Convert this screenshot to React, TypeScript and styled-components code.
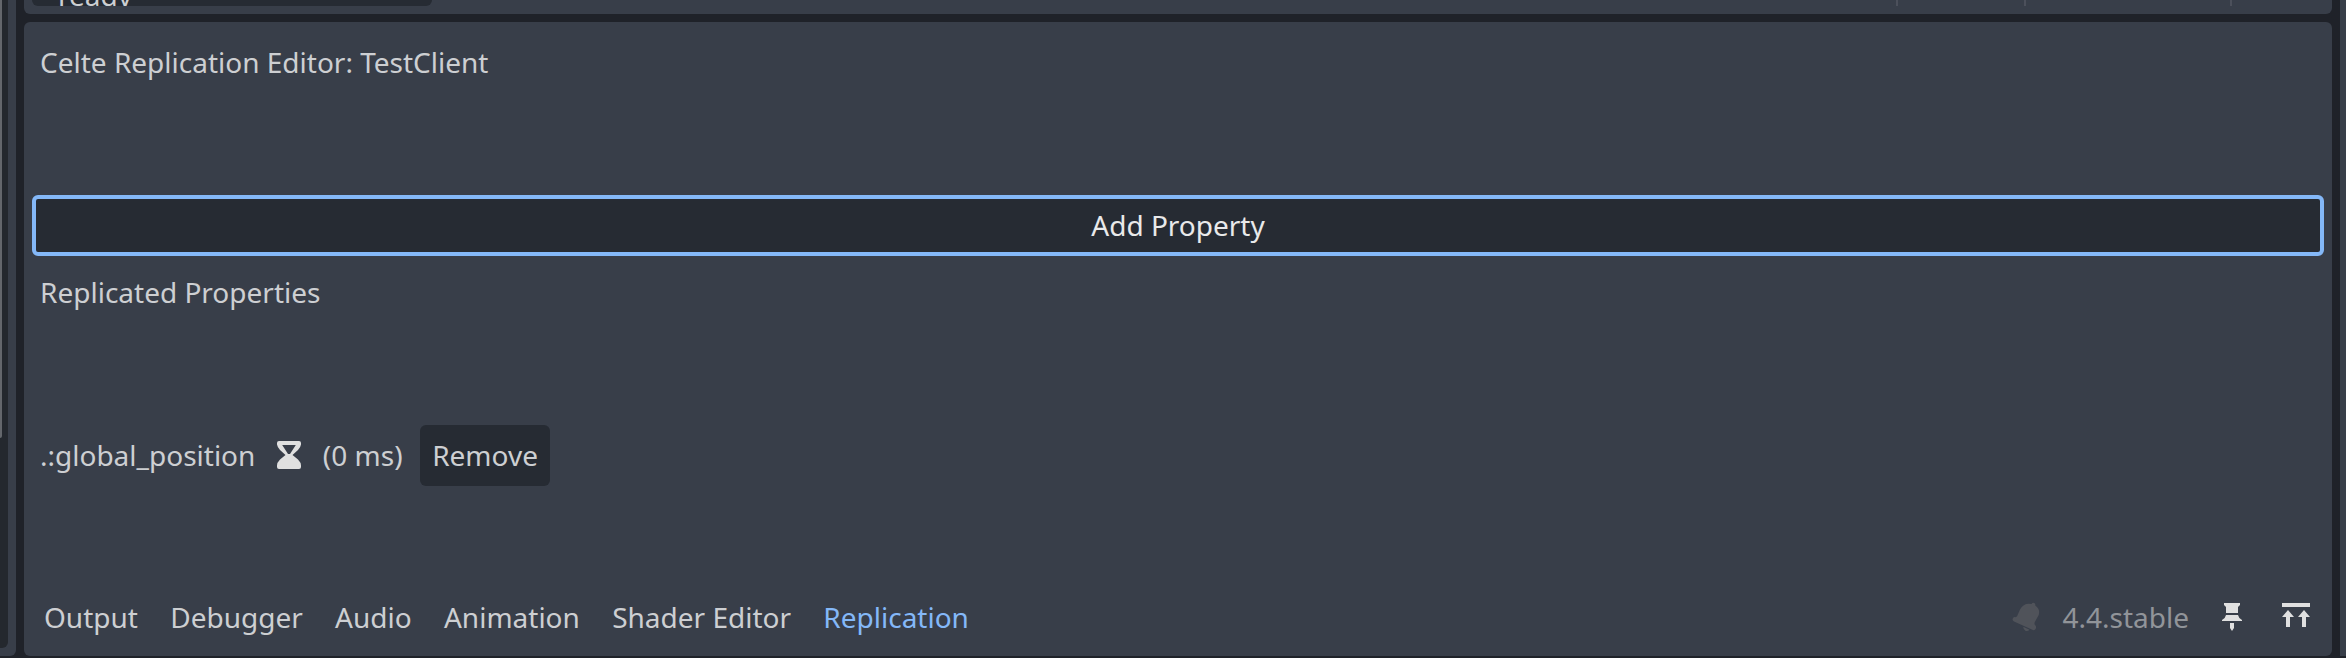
import React from "react";
import styled, { createGlobalStyle } from "styled-components";

const GlobalStyle = createGlobalStyle`
  * { box-sizing: border-box; }
  html, body { margin: 0; background: #1f2229; }
  body { overflow: hidden; font: 28px/38px "Noto Sans", sans-serif; color: #cdcfd2; }
  button { font: inherit; color: inherit; border: 0; background: none; padding: 0; }
`;

const Window = styled.div`
  display: flex;
  gap: 8px;
  width: 2346px;
  height: 658px;
  overflow: hidden;
  white-space: nowrap;
`;

const LeftDock = styled.aside`
  width: 16px;
  height: 656px;
  background: #383e49;
  border-bottom-right-radius: 6px;
`;

const ScrollTrack = styled.div`
  width: 8px;
  height: 648px;
  background: #24282e;
  border-bottom-right-radius: 6px;
`;

const ScrollThumb = styled.div`
  width: 2px;
  height: 438px;
  background: #64676c;
  border-bottom-right-radius: 2px;
`;

const RightDock = styled.aside`
  width: 6px;
  height: 656px;
  background: #383e49;
`;

const Center = styled.main`
  display: flex;
  flex-direction: column;
  gap: 8px;
  width: 2308px;
  height: 656px;
`;

const ScriptPanel = styled.section`
  display: flex;
  align-items: flex-start;
  height: 14px;
  padding: 0 100px 0 8px;
  background: #383e49;
  border-radius: 0 0 6px 6px;
`;

const MethodList = styled.div`
  display: flex;
  align-items: flex-end;
  width: 400px;
  height: 6px;
  margin-right: auto;
  padding-left: 26px;
  overflow: hidden;
  background: #262b33;
  border-radius: 0 0 6px 6px;
`;

const MethodName = styled.span`
  margin-bottom: -8px;
`;

const Separator = styled.i<{ $space: number }>`
  width: 2px;
  height: 6px;
  margin-left: ${(p) => p.$space}px;
  background: #4c505b;
`;

const BottomPanel = styled.section`
  display: flex;
  flex-direction: column;
  flex: 1;
  background: #383e49;
  border-radius: 6px;
`;

const Editor = styled.div`
  flex: 1;
  padding: 21px 8px 0;
`;

const Label = styled.div<{ $gap: number }>`
  margin-left: 8px;
  margin-bottom: ${(p) => p.$gap}px;
`;

const AddButton = styled.button`
  display: block;
  width: 100%;
  height: 61px;
  margin-bottom: 17px;
  padding-bottom: 2px;
  border: 4px solid #84b8f8;
  border-radius: 6px;
  background: #262b33;
  color: #e9e9ea;
`;

const PropertyRow = styled.div`
  display: flex;
  align-items: center;
  height: 61px;
  padding-left: 8px;
`;

const RowText = styled.span`
  padding-bottom: 2px;
`;

const Hourglass = styled.svg`
  width: 32px;
  height: 32px;
  margin: 0 17.5px 1px 18px;
`;

const RemoveButton = styled.button`
  width: 130px;
  height: 61px;
  margin-left: 17.5px;
  padding-bottom: 2px;
  border-radius: 6px;
  background: #262b33;
`;

const BottomBar = styled.nav`
  display: flex;
  align-items: center;
  height: 76px;
  padding: 0 20px 2px;
`;

const Tab = styled.button<{ $active?: boolean }>`
  margin-right: 32.3px;
  color: ${(p) => (p.$active ? "#84b8f8" : "inherit")};
`;

const Status = styled.div`
  display: flex;
  align-items: center;
  margin-left: auto;
`;

const Version = styled.span`
  margin: 0 27px 0 20px;
  color: #919499;
`;

const BarIcon = styled.svg<{ $space?: number }>`
  width: 32px;
  height: 32px;
  margin-left: ${(p) => p.$space ?? 0}px;
`;

const tabs = ["Output", "Debugger", "Audio", "Animation", "Shader Editor", "Replication"];

export default function App() {
  return (
    <>
      <GlobalStyle />
      <Window>
        <LeftDock>
          <ScrollTrack>
            <ScrollThumb />
          </ScrollTrack>
        </LeftDock>
        <Center>
          <ScriptPanel>
            <MethodList>
              <MethodName>ready</MethodName>
            </MethodList>
            <Separator $space={0} />
            <Separator $space={126} />
            <Separator $space={204} />
          </ScriptPanel>
          <BottomPanel>
            <Editor>
              <Label $gap={114}>Celte Replication Editor: TestClient</Label>
              <AddButton>Add Property</AddButton>
              <Label $gap={114}>Replicated Properties</Label>
              <PropertyRow>
                <RowText>.:global_position</RowText>
                <Hourglass viewBox="0 0 32 32" fill="#e0e0e0" fillRule="evenodd">
                  <path d="M6 2h20q2 0 2 2v1.500q-.5 3-3 5.500L19.500 16l5.500 4.500q3 3 3 6V28q0 2-2 2H6q-2 0-2-2v-1.500q0-3 3-6L12.500 16 7 11Q4.500 8.500 4 5.500V4q0-2 2-2zM9.200 6l5.800 9h2l5.800-9z" />
                </Hourglass>
                <RowText>(0 ms)</RowText>
                <RemoveButton>Remove</RemoveButton>
              </PropertyRow>
            </Editor>
            <BottomBar>
              {tabs.map((tab) => (
                <Tab key={tab} $active={tab === "Replication"}>
                  {tab}
                </Tab>
              ))}
              <Status>
                <BarIcon viewBox="0 0 32 32" fill="#50535a">
                  <path d="M21.500 3q1-1.700 2.700-1 1.600.8 1 2.500 5.300 3.500 3.500 9.500l-4 7.300q-.7 1.800.8 3.300 1 1.200.3 3-.9 2-2.900 1.500L4 20.500q-2-1-1.200-3 .9-1.700 2.700-1.300 1.200-.2 1.700-1.200L10 8.500Q14 1.300 21.500 3zM13.200 25.800l6.300 2.900q-1.600 1.900-3.800 1.200-2.500-1-2.500-4.100z" />
                </BarIcon>
                <Version>4.4.stable</Version>
                <BarIcon viewBox="0 0 32 32" fill="#e0e0e0">
                  <path d="M8 2h16v2l-2 2v6H10V6L8 4zM10 14h12q.5 3 4 5v1H6v-1q3.500-2 4-5zM14 22h4v5l-2 3-2-3z" />
                </BarIcon>
                <BarIcon $space={32} viewBox="0 0 32 32" fill="#e0e0e0">
                  <path d="M2 2h28v4H2zM8 9l6 7h-4v10H6V16H2zM24 9l6 7h-4v10h-4V16h-4z" />
                </BarIcon>
              </Status>
            </BottomBar>
          </BottomPanel>
        </Center>
        <RightDock />
      </Window>
    </>
  );
}
